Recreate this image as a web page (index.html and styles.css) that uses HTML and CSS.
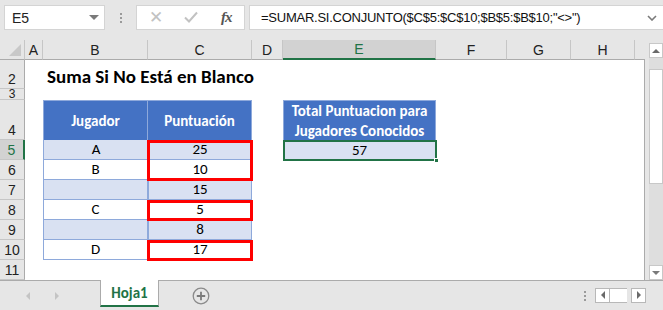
FILE: index.html
```html
<!DOCTYPE html>
<html lang="es">
<head>
    <meta charset="UTF-8">
    <title>Hoja1</title>
    <link rel="stylesheet" href="styles.css">
</head>
<body>
    <!-- formula bar -->
    <div class="formula-bar">
        <div class="name-box">
            <span>E5</span>
            <span class="tri-down"></span>
        </div>
        <div class="grip"><i></i><i></i><i></i></div>
        <div class="fx-box">
            <span class="fx-btn cancel">✕</span>
            <span class="fx-btn ok">
                <svg width="14" height="12" viewBox="0 0 14 12"><path d="M1 6.5 L5 10.5 L13 1.5" fill="none" stroke="#c2c2c2" stroke-width="2"/></svg>
            </span>
            <span class="fx-btn fx">fx</span>
        </div>
        <div class="formula-input">
            <span>=SUMAR.SI.CONJUNTO($C$5:$C$10;$B$5:$B$10;"&lt;&gt;")</span>
            <svg class="chev" width="10" height="6" viewBox="0 0 10 6"><path d="M1 1 L5 5 L9 1" fill="none" stroke="#7a7a7a" stroke-width="1.6"/></svg>
        </div>
    </div>

    <div class="sheet-wrap">
        <div class="sheet">
            <div class="corner"><span class="corner-tri"></span></div>
            <div class="col-head" style="grid-column:2">A</div>
            <div class="col-head" style="grid-column:3">B</div>
            <div class="col-head" style="grid-column:4">C</div>
            <div class="col-head" style="grid-column:5">D</div>
            <div class="col-head active" style="grid-column:6">E</div>
            <div class="col-head" style="grid-column:7">F</div>
            <div class="col-head" style="grid-column:8">G</div>
            <div class="col-head" style="grid-column:9">H</div>
            <div class="col-head last" style="grid-column:10"></div>

            <div class="row-head" style="grid-row:2">2</div>
            <div class="row-head short" style="grid-row:3">3</div>
            <div class="row-head" style="grid-row:4">4</div>
            <div class="row-head active" style="grid-row:5">5</div>
            <div class="row-head" style="grid-row:6">6</div>
            <div class="row-head" style="grid-row:7">7</div>
            <div class="row-head" style="grid-row:8">8</div>
            <div class="row-head" style="grid-row:9">9</div>
            <div class="row-head" style="grid-row:10">10</div>
            <div class="row-head" style="grid-row:11">11</div>

            <div class="title" style="grid-row:2;grid-column:3 / 7">Suma Si No Está en Blanco</div>

            <div class="th" style="grid-row:4;grid-column:3">Jugador</div>
            <div class="th" style="grid-row:4;grid-column:4">Puntuación</div>

            <div class="td band" style="grid-row:5;grid-column:3">A</div>
            <div class="td band" style="grid-row:5;grid-column:4">25</div>
            <div class="td" style="grid-row:6;grid-column:3">B</div>
            <div class="td" style="grid-row:6;grid-column:4">10</div>
            <div class="td band" style="grid-row:7;grid-column:3"></div>
            <div class="td band" style="grid-row:7;grid-column:4">15</div>
            <div class="td" style="grid-row:8;grid-column:3">C</div>
            <div class="td" style="grid-row:8;grid-column:4">5</div>
            <div class="td band" style="grid-row:9;grid-column:3"></div>
            <div class="td band" style="grid-row:9;grid-column:4">8</div>
            <div class="td" style="grid-row:10;grid-column:3">D</div>
            <div class="td" style="grid-row:10;grid-column:4">17</div>

            <div class="th total" style="grid-row:4;grid-column:6">Total Puntuacion para<br>Jugadores Conocidos</div>
            <div class="td band result" style="grid-row:5;grid-column:6">57</div>
            <div class="selection" style="grid-row:5;grid-column:6"><span class="handle"></span></div>

            <div class="mark" style="grid-row:5 / 7;grid-column:4"></div>
            <div class="mark" style="grid-row:8;grid-column:4"></div>
            <div class="mark" style="grid-row:10;grid-column:4"></div>
        </div>

        <div class="vscroll">
            <div class="sbtn"><span class="tri-up"></span></div>
            <div class="track"><div class="thumb"></div></div>
            <div class="sbtn"><span class="tri-down small"></span></div>
        </div>
    </div>

    <!-- sheet tabs -->
    <div class="tab-bar">
        <div class="tab-nav">
            <span class="tri-left light"></span>
            <span class="tri-right light"></span>
        </div>
        <div class="tab">Hoja1</div>
        <div class="add-sheet">
            <svg width="18" height="18" viewBox="0 0 18 18"><circle cx="9" cy="9" r="7.8" fill="none" stroke="#8a8a8a" stroke-width="1.3"/><path d="M9 4.8 V13.2 M4.8 9 H13.2" stroke="#7a7a7a" stroke-width="1.8"/></svg>
        </div>
        <div class="spacer"></div>
        <div class="grip small"><i></i><i></i><i></i></div>
        <div class="hscroll">
            <div class="hbtn"><span class="tri-left"></span></div>
            <div class="hthumb"></div>
            <div class="hbtn"><span class="tri-right"></span></div>
        </div>
    </div>
</body>
</html>
```

FILE: styles.css
```css
:root {
    --chrome: #e6e6e6;
    --line: #c6c6c6;
    --head-blue: #4472c4;
    --band: #d9e1f2;
    --table-line: #8ea9db;
    --green: #217346;
}

* {
    box-sizing: border-box;
}

body {
    margin: 0;
    width: 663px;
    height: 310px;
    overflow: hidden;
    background: var(--chrome);
    font-family: "Liberation Sans", Arial, sans-serif;
    color: #222;
}

/* Formula bar */
.formula-bar {
    height: 40px;
    display: flex;
    align-items: flex-start;
    padding: 5px 0 0 4px;
}

.name-box {
    width: 101px;
    height: 25px;
    background: #fff;
    border: 1px solid #d4d4d4;
    display: flex;
    align-items: center;
    justify-content: space-between;
    padding: 0 5px 0 7px;
    font-size: 14px;
}

.grip {
    width: 31px;
    height: 25px;
    display: flex;
    flex-direction: column;
    align-items: center;
    justify-content: center;
    gap: 2px;
}
.grip i {
    width: 2px;
    height: 2px;
    background: #9a9a9a;
}
.grip.small {
    width: 20px;
    height: 30px;
}

.fx-box {
    width: 109px;
    height: 25px;
    background: #fff;
    border: 1px solid #d4d4d4;
    display: flex;
    align-items: center;
}
.fx-btn {
    width: 36px;
    text-align: center;
    color: #c2c2c2;
    font-size: 15px;
}
.fx-btn.cancel {
    font-size: 17px;
    padding-left: 2px;
}
.fx-btn.fx {
    color: #555;
    font-family: "Liberation Serif", serif;
    font-style: italic;
    font-weight: bold;
    font-size: 15px;
    letter-spacing: -1px;
}

.formula-input {
    flex: 1;
    margin-left: 4px;
    height: 25px;
    background: #fff;
    border: 1px solid #d4d4d4;
    border-right: none;
    display: flex;
    align-items: center;
    justify-content: space-between;
    padding: 0 6px 0 11px;
    font-size: 13px;
    letter-spacing: -0.25px;
    color: #111;
}

/* triangles */
.tri-down {
    width: 0;
    height: 0;
    border-left: 5px solid transparent;
    border-right: 5px solid transparent;
    border-top: 5px solid #7a7a7a;
}
.tri-down.small {
    border-left-width: 4px;
    border-right-width: 4px;
    border-top-width: 4px;
}
.tri-up {
    width: 0;
    height: 0;
    border-left: 4px solid transparent;
    border-right: 4px solid transparent;
    border-bottom: 4px solid #6a6a6a;
}
.tri-left {
    width: 0;
    height: 0;
    border-top: 4px solid transparent;
    border-bottom: 4px solid transparent;
    border-right: 4px solid #6a6a6a;
}
.tri-right {
    width: 0;
    height: 0;
    border-top: 4px solid transparent;
    border-bottom: 4px solid transparent;
    border-left: 4px solid #6a6a6a;
}
.tri-left.light { border-right-color: #c4c4c4; }
.tri-right.light { border-left-color: #c4c4c4; }

/* Sheet */
.sheet-wrap {
    height: 240px;
    display: flex;
}

.sheet {
    width: 649px;
    display: grid;
    grid-template-columns: 25px 18px 105px 104px 31px 153px 71px 64px 64px 1fr;
    grid-template-rows: 20px 29px 11px 40px repeat(7, 20px);
    background: #fff;
    border-right: 4px solid var(--chrome);
    box-shadow: inset -1px 0 0 #ababab;
    font-family: Carlito, Lato, "Liberation Sans", sans-serif;
    font-size: 15px;
}

.corner {
    grid-row: 1;
    grid-column: 1;
    background: var(--chrome);
    border-right: 1px solid var(--line);
    border-bottom: 1px solid #ababab;
    display: flex;
    align-items: flex-end;
    justify-content: flex-end;
    padding: 0 3px 3px 0;
}
.corner-tri {
    width: 0;
    height: 0;
    border-left: 12px solid transparent;
    border-bottom: 12px solid #c8c8c8;
}

.col-head {
    grid-row: 1;
    background: var(--chrome);
    border-right: 1px solid var(--line);
    border-bottom: 1px solid #ababab;
    display: flex;
    align-items: center;
    justify-content: center;
    font-family: "Liberation Sans", Arial, sans-serif;
    font-size: 14px;
    color: #222;
}
.col-head.active {
    background: #d2d2d2;
    border-bottom: 2px solid var(--green);
    color: var(--green);
}
.col-head.last {
    border-right: none;
}

.row-head {
    grid-column: 1;
    background: var(--chrome);
    border-right: 1px solid #ababab;
    border-bottom: 1px solid var(--line);
    display: flex;
    align-items: flex-end;
    justify-content: center;
    overflow: hidden;
    line-height: 18px;
    font-family: "Liberation Sans", Arial, sans-serif;
    font-size: 14px;
    color: #222;
}
.row-head.short {
    line-height: 10px;
    font-size: 12px;
    align-items: flex-start;
}
.row-head.active {
    background: #d2d2d2;
    border-right: 2px solid var(--green);
    color: var(--green);
}

.title {
    display: flex;
    align-items: flex-end;
    padding: 0 0 1px 4px;
    font-weight: bold;
    font-size: 19px;
    color: #000;
    white-space: nowrap;
}

.th {
    background: var(--head-blue);
    color: #fff;
    font-weight: bold;
    display: flex;
    align-items: center;
    justify-content: center;
    text-align: center;
    border: 1px solid var(--table-line);
    border-bottom: none;
    line-height: 20px;
}
.th + .th {
    border-left: none;
}
.th.total {
    border-left: 1px solid var(--table-line);
}

.td {
    display: flex;
    align-items: flex-end;
    justify-content: center;
    line-height: 19px;
    border-left: 1px solid var(--table-line);
    border-bottom: 1px solid var(--table-line);
    color: #000;
}
.td + .td {
    border-right: 1px solid var(--table-line);
}
.td.band {
    background: var(--band);
}
.td.result {
    border: none;
}

.selection {
    border: 2px solid var(--green);
    display: flex;
    justify-content: flex-end;
    align-items: flex-end;
    margin: 0 -1px -1px 0;
}
.handle {
    width: 5px;
    height: 5px;
    background: var(--green);
    border: 1px solid #fff;
    margin: 0 -4px -4px 0;
}

.mark {
    border: 3px solid #ff0000;
    margin: 0 -1px -1px -1px;
}

/* vertical scrollbar */
.vscroll {
    width: 14px;
    display: flex;
    flex-direction: column;
    padding: 3px 0 0;
}
.sbtn {
    height: 15px;
    background: #fff;
    border: 1px solid #c8c8c8;
    display: flex;
    align-items: center;
    justify-content: center;
}
.track {
    flex: 1;
    background: #dedede;
    padding-top: 11px;
}
.thumb {
    height: 115px;
    background: #fff;
    border: 1px solid #c8c8c8;
}

/* sheet tabs */
.tab-bar {
    height: 30px;
    display: flex;
    align-items: flex-start;
    border-top: 1px solid #ababab;
}
.tab-nav {
    width: 100px;
    height: 29px;
    display: flex;
    align-items: center;
    gap: 25px;
    padding-left: 26px;
}
.tab {
    width: 59px;
    height: 27px;
    margin-top: -1px;
    background: #fff;
    border-left: 1px solid #ababab;
    border-right: 1px solid #ababab;
    border-bottom: 2px solid var(--green);
    display: flex;
    align-items: center;
    justify-content: center;
    font-family: Carlito, Lato, "Liberation Sans", sans-serif;
    font-weight: bold;
    font-size: 15px;
    color: var(--green);
}
.add-sheet {
    margin-left: 33px;
    height: 29px;
    display: flex;
    align-items: center;
}
.spacer {
    flex: 1;
}
.hscroll {
    display: flex;
    align-items: center;
    gap: 0;
    height: 30px;
    margin-right: 17px;
    margin-top: -1px;
}
.hbtn {
    width: 15px;
    height: 15px;
    background: #fff;
    border: 1px solid #b8b8b8;
    display: flex;
    align-items: center;
    justify-content: center;
}
.hthumb {
    width: 17px;
    height: 15px;
    background: #fff;
    border-top: 1px solid #b8b8b8;
    border-bottom: 1px solid #b8b8b8;
    margin-right: 4px;
}
```
